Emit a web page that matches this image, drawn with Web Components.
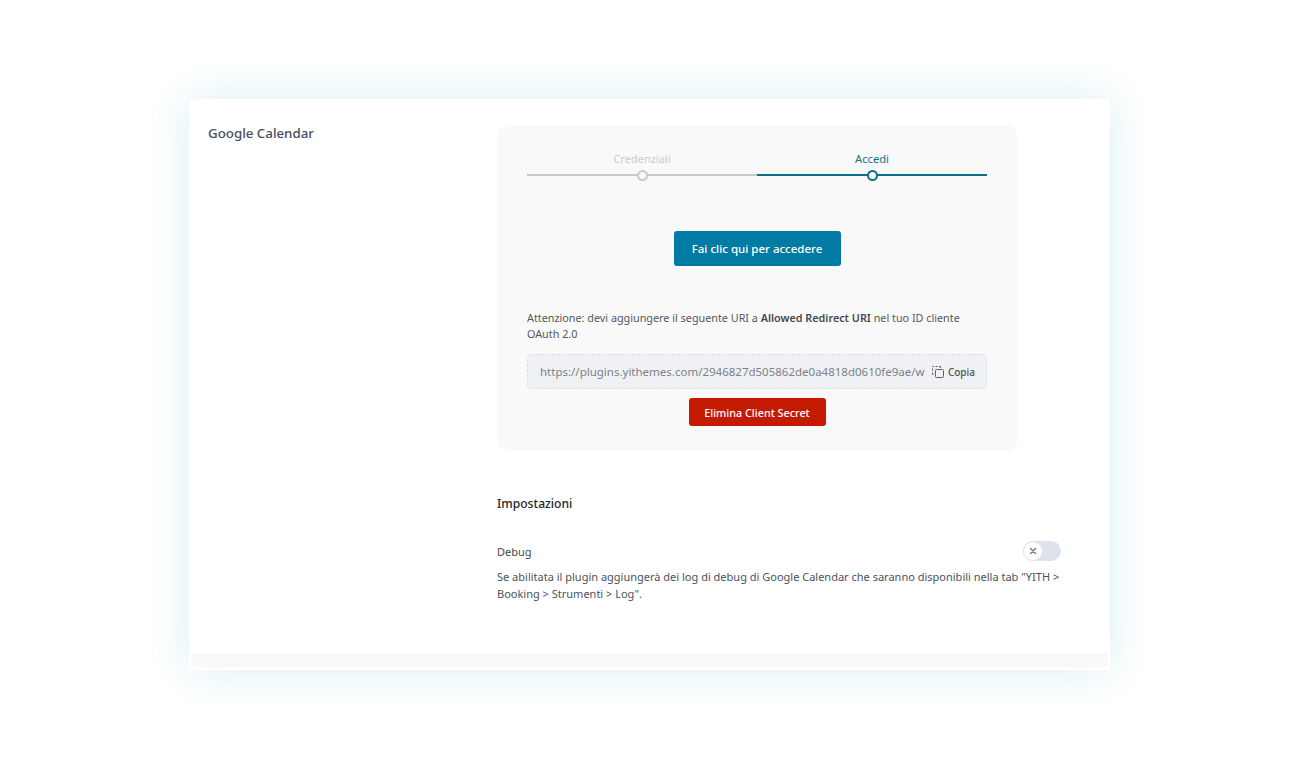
<!DOCTYPE html>
<html lang="it">
<head>
<meta charset="utf-8">
<title>Google Calendar</title>
<style>
    html, body { margin:0; padding:0; background:#fff; }
    body { font-family:"Noto Sans", "Open Sans", sans-serif; height:767px; overflow:hidden; }
</style>
</head>
<body>
<settings-page></settings-page>
<script>
class StepProgress extends HTMLElement
{
    constructor()
    {
        super();
        this.shadow = this.attachShadow({ mode:"open" })
    }
    connectedCallback()
    {
        this.shadow.innerHTML = `
            <style>
                :host { display:flex; }
                .step {
                    flex:1;
                    display:flex;
                    flex-direction:column;
                    align-items:center;
                    font-size:11px;
                    line-height:16px;
                    color:#c9cbcc;
                }
                .step.active { color:#0e7490; font-size:11.2px; }
                .track {
                    align-self:stretch;
                    height:2px;
                    margin-top:7px;
                    background:#c9c9c9;
                    display:flex;
                    justify-content:center;
                    align-items:center;
                }
                .active .track { background:#0d6f87; }
                .dot {
                    flex:none;
                    width:7px;
                    height:7px;
                    border:2px solid #c9c9c9;
                    border-radius:50%;
                    background:#f9f9f9;
                }
                .active .dot { border-color:#0d6f87; }
            </style>
            <div class="step"><span>Credenziali</span><div class="track"><div class="dot"></div></div></div>
            <div class="step active"><span>Accedi</span><div class="track"><div class="dot"></div></div></div>
        `
    }
}
customElements.define("step-progress", StepProgress)

class ActionButton extends HTMLElement
{
    constructor()
    {
        super();
        this.shadow = this.attachShadow({ mode:"open" })
    }
    connectedCallback()
    {
        this.shadow.innerHTML = `
            <style>
                :host { display:inline-flex; }
                a {
                    display:flex;
                    align-items:center;
                    justify-content:center;
                    box-sizing:border-box;
                    width:var(--btn-width);
                    height:var(--btn-height);
                    background:var(--btn-color);
                    border-radius:3px;
                    color:#fff;
                    font-size:var(--btn-font);
                    font-weight:500;
                    text-decoration:none;
                }
            </style>
            <a href="#"><slot></slot></a>
        `
    }
}
customElements.define("action-button", ActionButton)

class CopyField extends HTMLElement
{
    constructor()
    {
        super();
        this.shadow = this.attachShadow({ mode:"open" })
    }
    connectedCallback()
    {
        this.shadow.innerHTML = `
            <style>
                :host {
                    display:flex;
                    align-items:center;
                    box-sizing:border-box;
                    height:35px;
                    padding:0 11px 0 12px;
                    background:#f0f1f4;
                    border:1px dashed #dcdee3;
                    border-radius:5px;
                }
                .url {
                    width:386px;
                    overflow:hidden;
                    white-space:nowrap;
                    font-size:11.5px;
                    color:#7d8288;
                }
                .copy {
                    margin-left:auto;
                    display:flex;
                    align-items:center;
                    gap:3px;
                    font-size:10px;
                    font-weight:500;
                    color:#4b5157;
                }
                svg { display:block; }
            </style>
            <span class="url"><slot></slot></span>
            <span class="copy">
                <svg width="14" height="14" viewBox="0 0 14 14" fill="none" stroke="#5c6167" stroke-width="1">
                    <rect x="4.5" y="4.5" width="8" height="8" rx="1"></rect>
                    <path d="M2.5 9.5h-1v-2M1.5 5.5v-2M1.5 2V1.5H3M4.5 1.5h2M8 1.5h1.5V3"></path>
                </svg>
                Copia
            </span>
        `
    }
}
customElements.define("copy-field", CopyField)

class ToggleSwitch extends HTMLElement
{
    constructor()
    {
        super();
        this.shadow = this.attachShadow({ mode:"open" })
    }
    connectedCallback()
    {
        this.shadow.innerHTML = `
            <style>
                :host {
                    display:flex;
                    align-items:center;
                    box-sizing:border-box;
                    width:38px;
                    height:20px;
                    background:#dde3ec;
                    border-radius:10px;
                }
                .knob {
                    display:flex;
                    align-items:center;
                    justify-content:center;
                    box-sizing:border-box;
                    width:20px;
                    height:20px;
                    background:#fff;
                    border:1px solid #dde3ec;
                    border-radius:50%;
                }
            </style>
            <div class="knob">
                <svg width="8" height="8" viewBox="0 0 8 8" stroke="#7c8187" stroke-width="1.5" stroke-linecap="round"><path d="M1.5 1.5l5 5M6.5 1.5l-5 5"></path></svg>
            </div>
        `
    }
}
customElements.define("toggle-switch", ToggleSwitch)

class CalendarCard extends HTMLElement
{
    constructor()
    {
        super();
        this.shadow = this.attachShadow({ mode:"open" })
    }
    connectedCallback()
    {
        this.shadow.innerHTML = `
            <style>
                :host {
                    display:flex;
                    flex-direction:column;
                    box-sizing:border-box;
                    width:520px;
                    height:326px;
                    padding:26px 30px 0;
                    background:#f9f9f9;
                    border-radius:10px;
                }
                .center { display:flex; justify-content:center; }
                .login { margin-top:55px; --btn-width:167px; --btn-height:35px; --btn-color:#017ba3; --btn-font:11.5px; }
                p {
                    margin:44px 0 12px;
                    font-size:10.8px;
                    line-height:16px;
                    color:#53585d;
                }
                b { font-weight:600; color:#45494e; }
                .remove { margin-top:9px; --btn-width:137px; --btn-height:28px; --btn-color:#c41a02; --btn-font:10.8px; }
            </style>
            <step-progress></step-progress>
            <div class="center login"><action-button>Fai clic qui per accedere</action-button></div>
            <p>Attenzione: devi aggiungere il seguente URI a <b>Allowed Redirect URI</b> nel tuo ID cliente OAuth 2.0</p>
            <copy-field>https://plugins.yithemes.com/2946827d505862de0a4818d0610fe9ae/w</copy-field>
            <div class="center remove"><action-button>Elimina Client Secret</action-button></div>
        `
    }
}
customElements.define("calendar-card", CalendarCard)

class SettingsPage extends HTMLElement
{
    constructor()
    {
        super();
        this.shadow = this.attachShadow({ mode:"open" })
    }
    connectedCallback()
    {
        this.shadow.innerHTML = `
            <style>
                :host { display:block; padding:99px 1px 0 0; }
                .panel {
                    box-sizing:border-box;
                    width:921px;
                    height:571px;
                    margin:0 auto;
                    padding:0 2px 3px;
                    display:flex;
                    flex-direction:column;
                    background:#fff;
                    box-shadow:0 0 42px rgba(90,190,210,.24);
                }
                .content { flex:1; display:grid; grid-template-columns:306px 564px; padding:26px 0 0 0; }
                h2 {
                    margin:0 0 0 17px;
                    font-size:13.3px;
                    line-height:16px;
                    font-weight:500;
                    color:#434d60;
                }
                h3 {
                    margin:44px 0 0;
                    font-size:12.1px;
                    line-height:18px;
                    font-weight:500;
                    color:#23272b;
                }
                .debug {
                    display:flex;
                    align-items:center;
                    justify-content:space-between;
                    margin-top:28px;
                    font-size:11px;
                    color:#43484e;
                }
                .desc {
                    margin:7px 0 0;
                    font-size:11px;
                    line-height:17px;
                    color:#4b5260;
                }
                .strip { height:14px; background:#f9f9fa; }
            </style>
            <div class="panel">
                <div class="content">
                    <h2>Google Calendar</h2>
                    <div>
                        <calendar-card></calendar-card>
                        <h3>Impostazioni</h3>
                        <div class="debug"><span>Debug</span><toggle-switch></toggle-switch></div>
                        <p class="desc">Se abilitata il plugin aggiungerà dei log di debug di Google Calendar che saranno disponibili nella tab "YITH &gt; Booking &gt; Strumenti &gt; Log".</p>
                    </div>
                </div>
                <div class="strip"></div>
            </div>
        `
    }
}
customElements.define("settings-page", SettingsPage)
</script>
</body>
</html>
